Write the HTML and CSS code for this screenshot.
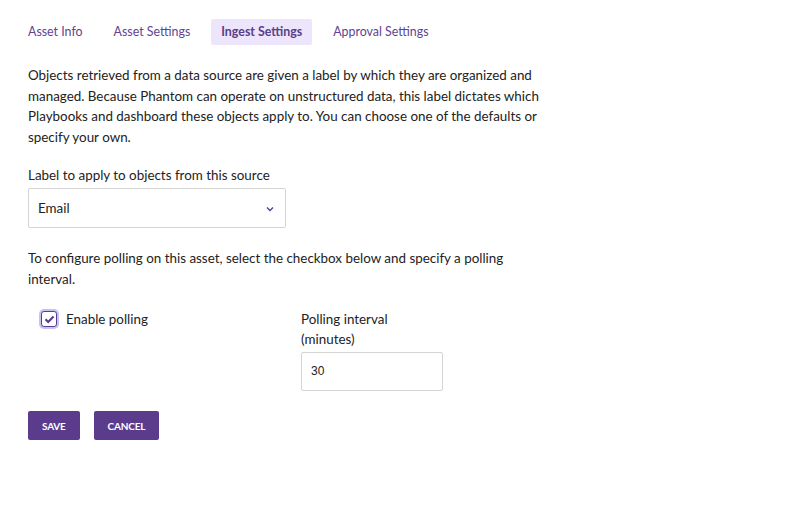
FILE: index.html
```html
<!DOCTYPE html>
<html>
<head>
<meta charset="utf-8">
<link rel="stylesheet" href="styles.css">
</head>
<body>
<div class="page">
  <nav class="tabs">
    <a class="tab">Asset Info</a>
    <a class="tab">Asset Settings</a>
    <a class="tab active">Ingest Settings</a>
    <a class="tab">Approval Settings</a>
  </nav>

  <p class="desc">Objects retrieved from a data source are given a label by which they are organized and<br>managed. Because Phantom can operate on unstructured data, this label dictates which<br>Playbooks and dashboard these objects apply to. You can choose one of the defaults or<br>specify your own.</p>

  <div class="field">
    <label class="label">Label to apply to objects from this source</label>
    <div class="select">
      <span>Email</span>
      <svg class="chev" width="8" height="6" viewBox="0 0 8 6"><path d="M1 1.5 L4 4.5 L7 1.5" fill="none" stroke="#5a3d8c" stroke-width="1.4"/></svg>
    </div>
  </div>

  <p class="desc polling">To configure polling on this asset, select the checkbox below and specify a polling<br>interval.</p>

  <div class="poll-row">
    <div class="check-wrap">
      <span class="checkbox">
        <svg width="11" height="9" viewBox="0 0 11 9"><path d="M1.5 4.3 L4.2 7 L9.5 1.5" fill="none" stroke="#5a3d8c" stroke-width="2.2"/></svg>
      </span>
      <span class="check-label">Enable polling</span>
    </div>
    <div class="interval">
      <label class="label">Polling interval<br>(minutes)</label>
      <div class="input">30</div>
    </div>
  </div>

  <div class="buttons">
    <button class="btn">SAVE</button>
    <button class="btn">CANCEL</button>
  </div>
</div>
</body>
</html>
```
FILE: styles.css
```css
* { box-sizing: border-box; }
html, body { margin: 0; background: #fff; }
body { font-family: "Lato", "Open Sans", sans-serif; color: #222; font-size: 13.4px; }
.page { padding: 19px 28px; }
.tabs { display: flex; gap: 11px; margin-left: -10px; }
.tab { display: block; padding: 0 10px; height: 26px; line-height: 26px; color: #5f4393; font-size: 12.4px; border-radius: 2px; }
.tab.active { background: #ece5fb; font-weight: 700; color: #5a3e8c; }
.desc { margin: 20px 0 0; line-height: 20.5px; width: 540px; }
.field { margin-top: 18px; }
.label { display: block; line-height: 20px; }
.select { margin-top: 3px; width: 258px; height: 40px; border: 1px solid #d4d4d4; border-radius: 2px; display: flex; align-items: center; justify-content: space-between; padding: 0 11px 0 9px; }
.chev { margin-top: 1px; }
.polling { margin-top: 20px; }
.poll-row { display: flex; margin-top: 20px; }
.check-wrap { display: flex; align-items: center; height: 20px; width: 273px; padding-left: 13px; }
.checkbox { width: 16px; height: 16px; border: 1.5px solid #5a3d8c; border-radius: 3px; box-shadow: 0 0 0 2px #c4c2f5; display: flex; align-items: center; justify-content: center; background: #fff; }
.check-label { margin-left: 9px; }
.interval { display: flex; flex-direction: column; }
.input { margin-top: 3px; width: 142px; height: 39px; border: 1px solid #d4d4d4; border-radius: 2px; font-family: "Liberation Sans", Arial, sans-serif; font-size: 12px; line-height: 37px; padding-left: 9px; }
.buttons { display: flex; gap: 14px; margin-top: 20px; }
.btn { background: #5a3b8c; color: #fff; border: 0; border-radius: 2px; height: 29px; padding: 0 14px; font-family: "Lato", sans-serif; font-weight: 700; font-size: 10px; letter-spacing: -0.2px; }
```
